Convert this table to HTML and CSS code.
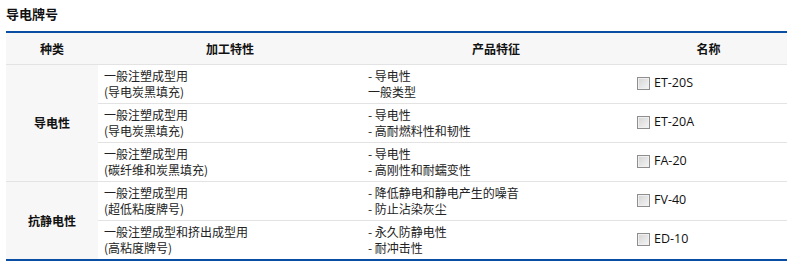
FILE: index.html
```html
<!DOCTYPE html>
<html lang="zh">
<head>
<meta charset="utf-8">
<link rel="stylesheet" href="styles.css">
</head>
<body>
<div class="page">
  <h2 class="title">导电牌号</h2>
  <table class="grades">
    <thead>
      <tr>
        <th class="c1">种类</th>
        <th class="c2">加工特性</th>
        <th class="c3">产品特征</th>
        <th class="c4">名称</th>
      </tr>
    </thead>
    <tbody>
      <tr>
        <td class="kind" rowspan="3">导电性</td>
        <td>一般注塑成型用<br>(导电炭黑填充)</td>
        <td>- 导电性<br>一般类型</td>
        <td><label class="name"><span class="box"></span>ET-20S</label></td>
      </tr>
      <tr>
        <td>一般注塑成型用<br>(导电炭黑填充)</td>
        <td>- 导电性<br>- 高耐燃料性和韧性</td>
        <td><label class="name"><span class="box"></span>ET-20A</label></td>
      </tr>
      <tr>
        <td>一般注塑成型用<br>(碳纤维和炭黑填充)</td>
        <td>- 导电性<br>- 高刚性和耐蠕变性</td>
        <td><label class="name"><span class="box"></span>FA-20</label></td>
      </tr>
      <tr>
        <td class="kind" rowspan="2">抗静电性</td>
        <td>一般注塑成型用<br>(超低粘度牌号)</td>
        <td>- 降低静电和静电产生的噪音<br>- 防止沾染灰尘</td>
        <td><label class="name"><span class="box"></span>FV-40</label></td>
      </tr>
      <tr>
        <td>一般注塑成型和挤出成型用<br>(高粘度牌号)</td>
        <td>- 永久防静电性<br>- 耐冲击性</td>
        <td><label class="name"><span class="box"></span>ED-10</label></td>
      </tr>
    </tbody>
  </table>
</div>
</body>
</html>
```
FILE: styles.css
```css
html, body {
  margin: 0;
  padding: 0;
  background: #fff;
}
body {
  font-family: "Noto Sans CJK SC", "Noto Sans", sans-serif;
  font-size: 12px;
  color: #222;
}
.page {
  padding: 4px 3px 0 6px;
}
.title {
  margin: 0;
  font-size: 13px;
  font-weight: bold;
  line-height: 19px;
  color: #111;
  height: 27px;
}
.grades {
  width: 781px;
  border-collapse: collapse;
  border-top: 2px solid #0a4ea3;
  border-bottom: 2px solid #0a4ea3;
  table-layout: fixed;
}
.grades th {
  background: #f7f7f7;
  height: 31px;
  padding: 0;
  font-weight: bold;
  color: #111;
  text-align: center;
  border-bottom: 1px solid #e3e3e3;
  line-height: 16px;
}
.c1 { width: 92px; }
.c2 { width: 264px; }
.c3 { width: 268px; }
.c4 { width: auto; }
.grades td {
  height: 38px;
  padding: 0 6px 0 6px;
  line-height: 16px;
  border-bottom: 1px solid #e3e3e3;
  vertical-align: middle;
  text-align: left;
}
.grades td.kind {
  background: #f7f7f7;
  text-align: center;
  font-weight: bold;
  color: #111;
  padding: 0;
}
.grades tbody tr:last-child td {
  border-bottom: none;
}
.grades td .name {
  display: inline-flex;
  align-items: center;
  gap: 4px;
  padding-left: 1px;
  font-family: "Open Sans", "Noto Sans", sans-serif;
  font-size: 12.5px;
  color: #111;
}
.box {
  display: inline-block;
  width: 11px;
  height: 11px;
  border: 1px solid #8e8e8e;
  background: linear-gradient(135deg, #d4d4d4 0%, #e8e8e8 60%, #f4f4f4 100%);
  box-shadow: inset 0 0 0 1px #f0f0f0;
}
```
